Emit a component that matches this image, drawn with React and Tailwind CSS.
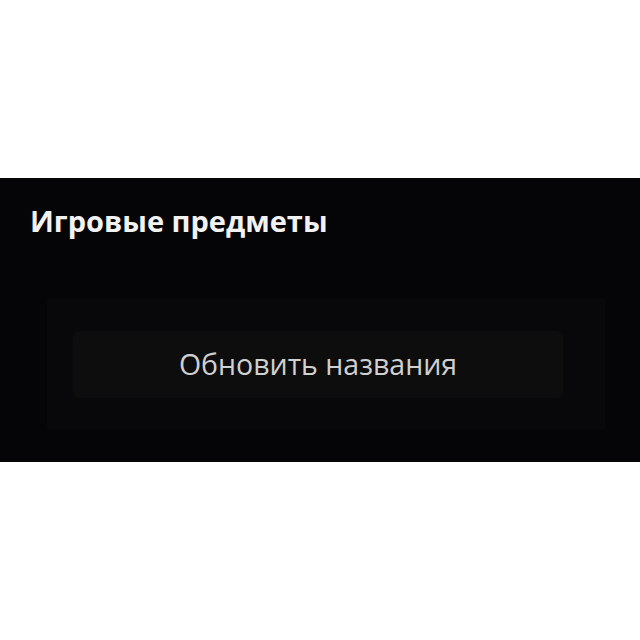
import React from "react";

const ItemsPanel = () => {
  return (
    <section className="h-[284px] bg-[#050507] pt-[24px]">
      <h2 className="pl-[30px] text-[29px] font-bold leading-[38px] text-[#f2f2f2]">
        Игровые предметы
      </h2>

      {/* action card */}
      <div className="ml-[47px] mr-[35px] mt-[58px] flex h-[132px] items-center rounded-sm bg-[#08080a]">
        <button className="ml-[26px] h-[67px] w-[490px] rounded-md bg-[#0d0d0e] text-[28.5px] text-[#d0d0d0]">
          Обновить названия
        </button>
      </div>
    </section>
  );
};

export default function App() {
  return (
    <div className="min-h-screen bg-white pt-[178px] font-['Open_Sans',sans-serif]">
      <ItemsPanel />
    </div>
  );
}
